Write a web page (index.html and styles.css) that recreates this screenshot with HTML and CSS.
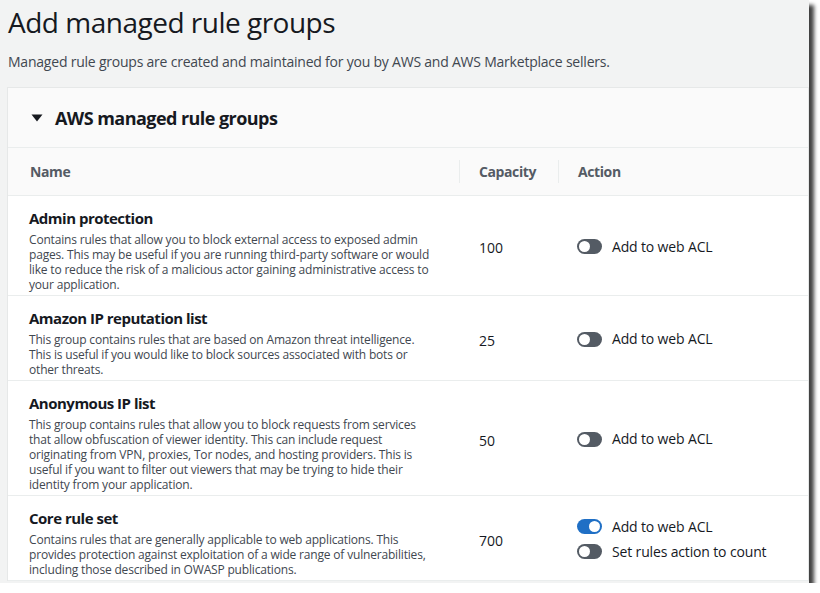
FILE: index.html
```html
<!DOCTYPE html>
<html>
<head>
<meta charset="utf-8">
<link rel="stylesheet" href="styles.css">
</head>
<body>
<div class="window">
  <h1 class="title">Add managed rule groups</h1>
  <p class="subtitle">Managed rule groups are created and maintained for you by AWS and AWS Marketplace sellers.</p>
  <div class="card">
    <div class="card-head">
      <svg class="caret" width="12" height="8" viewBox="0 0 12 8"><path d="M0.5 0.5 H11.5 L6 7.5 Z" fill="#16191f"/></svg>
      <span>AWS managed rule groups</span>
    </div>
    <div class="thead">
      <div class="th th-name">Name</div>
      <div class="th th-cap"><span class="sep"></span>Capacity</div>
      <div class="th th-act"><span class="sep"></span>Action</div>
    </div>
    <div class="row">
      <div class="cell-name">
        <div class="rname">Admin protection</div>
        <div class="rdesc">Contains rules that allow you to block external access to exposed admin pages. This may be useful if you are running third-party software or would like to reduce the risk of a malicious actor gaining administrative access to your application.</div>
      </div>
      <div class="cell-cap">100</div>
      <div class="cell-act">
        <div class="toggle"><span class="sw"></span>Add to web ACL</div>
      </div>
    </div>
    <div class="row">
      <div class="cell-name">
        <div class="rname">Amazon IP reputation list</div>
        <div class="rdesc">This group contains rules that are based on Amazon threat intelligence. This is useful if you would like to block sources associated with bots or other threats.</div>
      </div>
      <div class="cell-cap">25</div>
      <div class="cell-act">
        <div class="toggle"><span class="sw"></span>Add to web ACL</div>
      </div>
    </div>
    <div class="row">
      <div class="cell-name">
        <div class="rname">Anonymous IP list</div>
        <div class="rdesc">This group contains rules that allow you to block requests from services that allow obfuscation of viewer identity. This can include request originating from VPN, proxies, Tor nodes, and hosting providers. This is useful if you want to filter out viewers that may be trying to hide their identity from your application.</div>
      </div>
      <div class="cell-cap">50</div>
      <div class="cell-act">
        <div class="toggle"><span class="sw"></span>Add to web ACL</div>
      </div>
    </div>
    <div class="row">
      <div class="cell-name">
        <div class="rname">Core rule set</div>
        <div class="rdesc">Contains rules that are generally applicable to web applications. This provides protection against exploitation of a wide range of vulnerabilities, including those described in OWASP publications.</div>
      </div>
      <div class="cell-cap">700</div>
      <div class="cell-act stack">
        <div class="toggle"><span class="sw on"></span>Add to web ACL</div>
        <div class="toggle"><span class="sw"></span>Set rules action to count</div>
      </div>
    </div>
  </div>
</div>
</body>
</html>
```

FILE: styles.css
```css
* { box-sizing: border-box; }
html, body { margin: 0; padding: 0; background: #ffffff; }
body { font-family: "Open Sans", "Liberation Sans", sans-serif; color: #16191f; }

.window {
  width: 809px;
  height: 583px;
  background: #f2f3f3;
  overflow: hidden;
  box-shadow: 5px 5px 4px rgba(0, 0, 0, 0.75);
  padding: 0 0 0 7px;
}

.title {
  margin: 0;
  padding: 2px 0 0 1px;
  font-size: 28px;
  font-weight: 400;
  line-height: 40px;
  letter-spacing: -0.5px;
  color: #16191f;
}

.subtitle {
  margin: 0;
  padding: 10px 0 0 1px;
  font-size: 14px;
  line-height: 20px;
  letter-spacing: -0.22px;
  color: #414750;
}

.card {
  margin-top: 15px;
  width: 802px;
  background: #ffffff;
  border: 1px solid #e6e8e8;
  border-bottom: none;
}

.card-head {
  height: 60px;
  background: #fafafa;
  display: flex;
  align-items: center;
  padding-left: 23px;
  gap: 12px;
  font-size: 18px;
  font-weight: 700;
  letter-spacing: -0.55px;
  border-bottom: 1px solid #eaeded;
}
.caret { display: block; margin-top: 1px; }

.thead {
  display: flex;
  height: 48px;
  background: #fafafa;
  border-bottom: 1px solid #eaeded;
  font-size: 14px;
  font-weight: 700;
  letter-spacing: -0.4px;
  color: #545b64;
}
.th { display: flex; align-items: center; position: relative; }
.th-name { width: 451px; padding-left: 22px; }
.th-cap { width: 99px; padding-left: 20px; }
.th-act { flex: 1; padding-left: 20px; }
.sep {
  position: absolute;
  left: 0;
  top: 12px;
  bottom: 12px;
  width: 1px;
  background: #eaeded;
}

.row {
  display: flex;
  border-bottom: 1px solid #eaeded;
  background: #ffffff;
}
.cell-name { width: 451px; padding: 12px 24px 3px 21px; }
.rname { font-size: 15px; font-weight: 700; line-height: 20px; margin-bottom: 4px; letter-spacing: -0.5px; }
.rdesc { font-size: 12px; line-height: 15px; color: #414750; letter-spacing: -0.18px; }
.cell-cap {
  width: 99px;
  padding-left: 20px;
  display: flex;
  align-items: center;
  font-size: 14px;
  padding-top: 4px;
}
.cell-act {
  flex: 1;
  padding-left: 19px;
  display: flex;
  flex-direction: column;
  justify-content: center;
  padding-top: 2px;
  gap: 5px;
}
.toggle {
  display: flex;
  align-items: center;
  gap: 10px;
  font-size: 14px;
  line-height: 20px;
  letter-spacing: -0.15px;
}
.sw {
  position: relative;
  width: 25px;
  height: 15px;
  border-radius: 8px;
  background: #545b64;
}
.sw::after {
  content: "";
  position: absolute;
  left: 2px;
  top: 2px;
  width: 11px;
  height: 11px;
  border-radius: 50%;
  background: #ffffff;
}
.sw.on { background: #1f6fc5; }
.sw.on::after { left: 12px; }
```
